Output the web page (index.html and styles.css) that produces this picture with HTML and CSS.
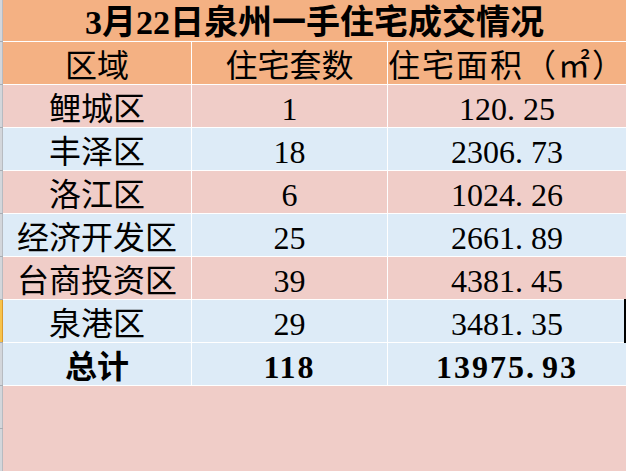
FILE: index.html
```html
<!DOCTYPE html>
<html lang="zh-CN">
<head>
<meta charset="utf-8">
<title>3月22日泉州一手住宅成交情况</title>
<link rel="stylesheet" href="styles.css">
</head>
<body>
<div class="app">
  <div class="rowhdr">
    <div class="rh rh-title"></div>
    <div class="rh"></div>
    <div class="rh"></div>
    <div class="rh"></div>
    <div class="rh"></div>
    <div class="rh"></div>
    <div class="rh"></div>
    <div class="rh rh-sel"></div>
    <div class="rh"></div>
    <div class="rh"></div>
    <div class="rh rh-rest"></div>
  </div>
  <div class="sheet">
    <div class="cell title">3月22日泉州一手住宅成交情况</div>
    <div class="cell head">区域</div>
    <div class="cell head">住宅套数</div>
    <div class="cell head head-wide">住宅面积（㎡）</div>

    <div class="cell pink">鲤城区</div>
    <div class="cell pink num">1</div>
    <div class="cell pink num">120<span class="dot">.</span>25</div>

    <div class="cell blue">丰泽区</div>
    <div class="cell blue num">18</div>
    <div class="cell blue num">2306<span class="dot">.</span>73</div>

    <div class="cell pink">洛江区</div>
    <div class="cell pink num">6</div>
    <div class="cell pink num">1024<span class="dot">.</span>26</div>

    <div class="cell blue">经济开发区</div>
    <div class="cell blue num">25</div>
    <div class="cell blue num">2661<span class="dot">.</span>89</div>

    <div class="cell pink">台商投资区</div>
    <div class="cell pink num">39</div>
    <div class="cell pink num">4381<span class="dot">.</span>45</div>

    <div class="cell blue">泉港区</div>
    <div class="cell blue num">29</div>
    <div class="cell blue num selected">3481<span class="dot">.</span>35</div>

    <div class="cell blue total">总计</div>
    <div class="cell blue num total">118</div>
    <div class="cell blue num total">13975<span class="dot">.</span>93</div>

    <div class="cell filler"></div>
  </div>
</div>
</body>
</html>
```

FILE: styles.css
```css
html, body {
  margin: 0;
  padding: 0;
  background: #ffffff;
}

.app {
  display: flex;
  width: 626px;
  height: 471px;
  overflow: hidden;
}

.rowhdr {
  width: 3px;
  flex: none;
  display: flex;
  flex-direction: column;
  gap: 1px;
  background: #a9adb3;
}

.rh {
  height: 42px;
  flex: none;
  background: #d3d6db;
  border-right: 1px solid #b7bbc1;
  box-sizing: border-box;
}

.rh-title {
  height: 41px;
}

.rh-sel {
  background: #f7c34c;
  border-right: 1px solid #dc9a2c;
}

.rh-rest {
  flex: 1;
}

.sheet {
  flex: 1;
  display: grid;
  grid-template-columns: 188px 195px 1fr;
  grid-template-rows: 41px 42px repeat(7, 42px) 1fr;
  gap: 1px;
  background: #ffffff;
}

.cell {
  display: flex;
  align-items: center;
  justify-content: center;
  box-sizing: border-box;
  padding-top: 5px;
  font-family: "Liberation Serif", "Noto Sans CJK SC", serif;
  font-size: 32px;
  line-height: 1;
  color: #000000;
  white-space: nowrap;
}

.title {
  grid-column: 1 / span 3;
  background: #f4b183;
  font-size: 34px;
  font-weight: 700;
  padding-top: 4px;
}

.head {
  background: #f4b183;
}

.head-wide {
  letter-spacing: 2px;
}

.pink {
  background: #f0cdc8;
}

.blue {
  background: #ddebf7;
}

.dot {
  display: inline-block;
  width: 0.5em;
  text-align: left;
}

.total {
  font-weight: 700;
}

.num.total {
  letter-spacing: 2px;
}

.selected {
  position: relative;
}

.selected::after {
  content: "";
  position: absolute;
  right: 0;
  top: -1px;
  bottom: -1px;
  width: 2px;
  background: #000000;
}

.filler {
  grid-column: 1 / span 3;
  background: #f0cdc8;
}
```
